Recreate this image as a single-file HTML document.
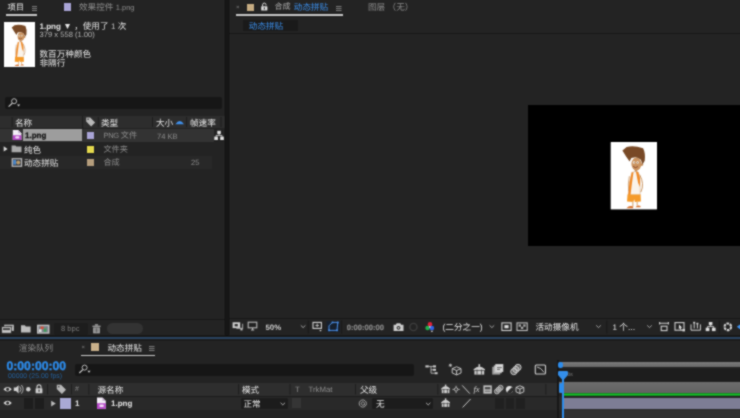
<!DOCTYPE html>
<html lang="zh">
<head>
<meta charset="utf-8">
<title>After Effects</title>
<style>
*{box-sizing:border-box;margin:0;padding:0}
html,body{width:740px;height:418px;overflow:hidden;background:#161616}
body{position:relative;font-family:"Liberation Sans","Noto Sans CJK SC",sans-serif;font-size:8.6px;line-height:1;color:#cfcfcf;-webkit-font-smoothing:antialiased;text-rendering:geometricPrecision}
.a{position:absolute}
.t{position:absolute;white-space:nowrap;line-height:10px;height:10px}
.panel{position:absolute;background:#232323;overflow:hidden}
.g{color:#8c8c8c}
.w{color:#e6e6e6}
.b{color:#3b8eea}
.bold{font-weight:bold}
svg{position:absolute;overflow:visible}
</style>
</head>
<body>
<svg width="0" height="0" style="position:absolute;left:0;top:0" aria-hidden="true"><defs><filter id="soften" x="0" y="0" width="100%" height="100%" color-interpolation-filters="sRGB"><feConvolveMatrix order="3" kernelMatrix="1 2 1 2 8 2 1 2 1" divisor="20" edgeMode="duplicate" preserveAlpha="true"/></filter></defs></svg>
<div id="root" style="position:absolute;left:0;top:0;width:740px;height:418px;overflow:hidden;filter:url(#soften)">

<!-- ================= PROJECT PANEL ================= -->
<div class="panel" id="project" style="left:0;top:0;width:225px;height:335px">
  <!-- tabs -->
  <div class="t w" style="left:7.5px;top:2px;font-size:8.3px">项目</div>
  <svg style="left:32px;top:5.5px" width="5" height="5" viewBox="0 0 5 5"><path d="M0 .5h5M0 2.5h5M0 4.5h5" stroke="#8c8c8c" stroke-width=".85"/></svg>
  <div class="a" style="left:6px;top:14.4px;width:31px;height:1.3px;background:#c8c8c8"></div>
  <div class="a" style="left:64px;top:3px;width:7.2px;height:7.5px;background:#a9a4d6"></div>
  <div class="t g" style="left:79px;top:2px">效果控件 <span style="font-size:7.5px">1.png</span></div>

  <!-- thumbnail -->
  <div class="a" style="left:4px;top:22px;width:30.5px;height:45px;background:#fff"></div>

  <!-- info -->
  <div class="t w" style="left:39.5px;top:21px"><span class="bold" style="font-size:8px">1.png</span> <span style="font-size:8.6px;position:relative;top:.4px">▼</span> ，使用了 <span style="font-size:8px;color:#c4c4c4">1</span> 次</div>
  <div class="t" style="left:39.5px;top:29.5px;font-size:7.6px;color:#b4b4b4">379 x 558 (1.00)</div>
  <div class="t w" style="left:39.5px;top:48.5px">数百万种颜色</div>
  <div class="t w" style="left:39.5px;top:57.5px">非隔行</div>

  <!-- search -->
  <div class="a" style="left:4.5px;top:97px;width:217px;height:12px;background:#161616;border-radius:2px"></div>

  <!-- header row -->
  <div class="a" style="left:0;top:115.6px;width:224.6px;height:12.7px;background:#2d2d2d"></div>
  <div class="t w" style="left:15px;top:118px">名称</div>
  <div class="t w" style="left:101px;top:118px">类型</div>
  <div class="t w" style="left:156px;top:118px">大小</div>
  <div class="t w" style="left:190px;top:118px">帧速率</div>

  <!-- row 1 selected -->
  <div class="a" style="left:0;top:128.7px;width:214px;height:13px;background:#333333"></div>
  <div class="a" style="left:23px;top:128.7px;width:59px;height:12.6px;background:#9d9d9d"></div>
  <div class="t bold" style="left:25px;top:131.3px;font-size:8px;color:#141414;-webkit-text-stroke:.25px #141414">1.png</div>
  <div class="a" style="left:86.8px;top:132px;width:7px;height:7px;background:#a9a4d6"></div>
  <div class="t g" style="left:103.4px;top:131.3px;font-size:8.2px"><span style="font-size:7.5px;letter-spacing:-.25px">PNG</span><span style="display:inline-block;width:1.9px"></span>文件</div>
  <div class="t g" style="left:157px;top:131.9px;font-size:7.6px">74 KB</div>

  <!-- row 2 -->
  <div class="t w" style="left:24px;top:144.8px">纯色</div>
  <div class="a" style="left:86.8px;top:145.5px;width:7px;height:7px;background:#e4d84c"></div>
  <div class="t g" style="left:103.4px;top:144.8px;font-size:8.2px">文件夹</div>

  <!-- row 3 -->
  <div class="a" style="left:0;top:155.6px;width:212px;height:13.4px;background:#282828"></div>
  <div class="t w" style="left:24px;top:158.4px">动态拼贴</div>
  <div class="a" style="left:86.8px;top:159px;width:7px;height:7px;background:#b59d7c"></div>
  <div class="t g" style="left:103.4px;top:158.4px;font-size:8.2px">合成</div>
  <div class="t g" style="left:191px;top:158.4px;font-size:7.6px">25</div>

  <!-- bottom toolbar -->
  <div class="a" style="left:0;top:318.7px;width:225px;height:1.2px;background:#181818"></div>
  <div class="a" style="left:53.8px;top:322.5px;width:34px;height:12px;background:#1d1d1d;border-radius:1.5px"></div>
  <div class="t" style="left:61px;top:323.7px;font-size:7.6px;color:#7d7d7d">8 bpc</div>
  <div class="a" style="left:106.8px;top:323px;width:36px;height:11.4px;background:#333333;border-radius:5.7px"></div>
</div>

<!-- ================= COMP PANEL ================= -->
<div class="panel" id="comp" style="left:228.5px;top:0;width:511.5px;height:335px">
  <!-- tabs (coords relative: subtract 228.5) -->
  <div class="t g" style="left:7.5px;top:2.5px;font-size:6px">×</div>
  <div class="a" style="left:18.5px;top:3.6px;width:7px;height:7px;background:#c6ac82"></div>
  <div class="t g" style="left:46px;top:2px;color:#a8a8a8;font-size:8.1px">合成</div>
  <div class="t b" style="left:65.3px;top:2px">动态拼贴</div>
  <svg style="left:107.5px;top:5.5px" width="5.5" height="5" viewBox="0 0 5.5 5"><path d="M0 .5h5.5M0 2.5h5.5M0 4.5h5.5" stroke="#8c8c8c" stroke-width=".85"/></svg>
  <div class="a" style="left:7.5px;top:14.2px;width:106.5px;height:1.4px;background:#c8c8c8"></div>
  <div class="t g" style="left:139.5px;top:2px">图层 （无）</div>

  <!-- breadcrumb -->
  <div class="a" style="left:14.5px;top:20px;width:55px;height:10.8px;background:#1a1a1a"></div>
  <div class="t b" style="left:20.3px;top:20.5px">动态拼贴</div>
  <div class="a" style="left:0;top:32.6px;width:512px;height:1.2px;background:#171717"></div>

  <!-- viewer -->
  <div class="a" style="left:299px;top:104.6px;width:213px;height:141.8px;background:#000"></div>
  <div class="a" style="left:382.2px;top:142.2px;width:46.2px;height:67.2px;background:#fff"></div>

  <!-- toolbar (x relative: page x - 228.5) -->
  <div class="a" style="left:0;top:318px;width:512px;height:1.2px;background:#181818"></div>
  <div class="t bold" style="left:37px;top:322.7px;font-size:7.8px;color:#cdcdcd">50%</div>
  <div class="t bold" style="left:118.3px;top:322.7px;font-size:7.6px;color:#8a8a8a;-webkit-text-stroke:.2px #8a8a8a">0:00:00:00</div>
  <div class="t w" style="left:214px;top:322px">(二分之一)</div>
  <div class="t w" style="left:307px;top:322px">活动摄像机</div>
  <div class="t w" style="left:384px;top:322px"><span style="font-size:8px">1</span> 个...</div>
</div>

<!-- gutter blue line -->
<div class="a" style="left:0;top:335px;width:740px;height:4px;background:#181818"></div>
<div class="a" style="left:0;top:336.7px;width:740px;height:2.5px;background:#294360"></div>

<!-- ================= TIMELINE PANEL ================= -->
<div class="panel" id="timeline" style="left:0;top:339px;width:740px;height:79px">
  <!-- coords relative: subtract 339 from y -->
  <div class="t g" style="left:18.8px;top:3.5px">渲染队列</div>
  <div class="t g" style="left:81.5px;top:4px;font-size:6px">×</div>
  <div class="a" style="left:91px;top:4.3px;width:8.3px;height:7.6px;background:#c9b08a"></div>
  <div class="t w" style="left:107.5px;top:3.5px">动态拼贴</div>
  <svg style="left:149px;top:7px" width="5.5" height="5" viewBox="0 0 5.5 5"><path d="M0 .5h5.5M0 2.5h5.5M0 4.5h5.5" stroke="#8c8c8c" stroke-width=".85"/></svg>
  <div class="a" style="left:81px;top:16px;width:73.5px;height:1.4px;background:#c8c8c8"></div>

  <div class="t bold" style="left:6.5px;top:20.5px;font-size:12.2px;line-height:12px;height:12px;color:#2d8ceb;-webkit-text-stroke:.35px #2d8ceb">0:00:00:00</div>
  <div class="t" style="left:8px;top:34px;font-size:6.9px;line-height:7px;height:7px;color:#24609c">00000 (25.00 fps)</div>

  <!-- search -->
  <div class="a" style="left:75px;top:24.6px;width:339px;height:12px;background:#161616;border-radius:2px"></div>

  <!-- header row -->
  <div class="a" style="left:0;top:43.5px;width:557px;height:13.5px;background:#2e2e2e"></div>
  <div class="t w" style="left:97.5px;top:45.5px">源名称</div>
  <div class="t w" style="left:242px;top:45.5px">模式</div>
  <div class="t g" style="left:295px;top:45.5px;font-size:7.8px">T&nbsp;&nbsp;&nbsp;&nbsp;TrkMat</div>
  <div class="t w" style="left:360px;top:45.5px">父级</div>
  <div class="t g" style="left:75px;top:45.5px;font-size:7px">#</div>
  <div class="t" style="left:473.4px;top:45px;font-size:8.6px;font-style:italic;color:#cfcfcf;font-family:'Liberation Serif',serif">fx</div>

  <div class="a" style="left:0;top:56.8px;width:557px;height:1.2px;background:#1b1b1b"></div>
  <!-- layer row -->
  <div class="a" style="left:0;top:58px;width:557px;height:13.3px;background:#292929"></div>
  <div class="a" style="left:23.8px;top:59px;width:8.8px;height:10.5px;background:#1d1d1d"></div>
  <div class="a" style="left:34.5px;top:59px;width:9.2px;height:10.5px;background:#1d1d1d"></div>
  <div class="a" style="left:60px;top:58.6px;width:10.8px;height:11.2px;background:#a9a9d4"></div>
  <div class="t w bold" style="left:75px;top:60px;font-size:8px">1</div>
  <div class="t w bold" style="left:111px;top:60px;font-size:8px">1.png</div>
  <div class="a" style="left:240.5px;top:58.5px;width:47.5px;height:11.5px;background:#1c1c1c;border-radius:1.5px"></div>
  <div class="t w" style="left:243.5px;top:59.8px">正常</div>
  <div class="a" style="left:292px;top:59px;width:9px;height:10px;background:#353535"></div>
  <div class="a" style="left:372px;top:58.5px;width:60.5px;height:11.5px;background:#1c1c1c;border-radius:1.5px"></div>
  <div class="t w" style="left:376px;top:59.8px">无</div>
  <div class="a" style="left:494.5px;top:59px;width:9px;height:10.5px;background:#202020"></div>
  <div class="a" style="left:505.5px;top:59px;width:8.5px;height:10.5px;background:#202020"></div>
  <div class="a" style="left:515.5px;top:59px;width:9px;height:10.5px;background:#202020"></div>

  <!-- time area -->
  <div class="a" style="left:557px;top:21px;width:1.6px;height:58px;background:#171717"></div>
  <div class="a" style="left:0;top:0;width:740px;height:2.4px;background:#1c1c1c"></div>
  <div class="a" style="left:563.6px;top:71.3px;width:177px;height:8px;background:#313131"></div>
  <div class="a" style="left:559px;top:22.7px;width:181px;height:5.8px;background:linear-gradient(#7a7a7a,#686868)"></div>
  <div class="a" style="left:558.4px;top:22.5px;width:4.8px;height:6.2px;background:#2d8ceb;border-radius:2px"></div>
  <div class="a" style="left:559px;top:29.7px;width:181px;height:12.8px;background:#1d1d1d"></div>
  <div class="a" style="left:559px;top:43.3px;width:181px;height:10.4px;background:linear-gradient(#6c6c6c,#626262)"></div>
  <div class="a" style="left:559px;top:43.5px;width:4px;height:10px;background:#2d8ceb;border-radius:2px"></div>
  <div class="a" style="left:563px;top:53.9px;width:177px;height:3.6px;background:linear-gradient(#0b5a14,#19c22c 35%,#19c22c 65%,#0b5a14)"></div>
  <div class="a" style="left:559px;top:58px;width:181px;height:13.3px;background:#2a2a2a"></div>
  <div class="a" style="left:563.9px;top:58.7px;width:177px;height:11.6px;background:#7d7d95"></div>
  <div class="a" style="left:562.3px;top:40px;width:1.4px;height:39px;background:#2d8ceb"></div>
  <svg style="left:558.1px;top:31.7px" width="10" height="9.6" viewBox="0 0 10 9.6"><path d="M1.2 0h7.6q1.2 0 1.2 1.2v2.9L5 9.6 0 4.1V1.2Q0 0 1.2 0z" fill="#338eea"/></svg>
  <div class="t" style="left:567.5px;top:30.5px;font-size:5px;color:#8a8a8a">0s</div>
</div>


<!-- ================= ICON OVERLAY (page coordinates) ================= -->
<svg id="icons" style="left:0;top:0;z-index:5" width="740" height="418" viewBox="0 0 740 418">
<defs>
  <g id="boy">
    <rect x="0" y="0" width="46.2" height="67.2" fill="#fff"/>
    <g filter="url(#soft)">
      <ellipse cx="25.7" cy="21.8" rx="5" ry="6.5" fill="#cb9460"/>
      <circle cx="31.1" cy="22.4" r="1.4" fill="#c58c58"/>
      <path d="M11.7 8.2 L16 4.8 Q23 3 32.4 6 Q35 11 34 18.6 L31.8 22.2 L30.2 17.6 Q27.4 15 24.8 15 L20.6 15.8 L18.9 19.4 L15.4 14.2 Z" fill="#784a25"/>
      <ellipse cx="23.3" cy="20.3" rx="1.2" ry="1.3" fill="#f6ece0"/><ellipse cx="26.9" cy="20.3" rx="1.2" ry="1.3" fill="#f6ece0"/>
      <circle cx="23.5" cy="20.5" r=".45" fill="#3a2414"/><circle cx="27" cy="20.5" r=".45" fill="#3a2414"/>
      <path d="M22.4 24.2q2.2 2.4 4.8 .2" stroke="#7a3a22" stroke-width=".8" fill="none"/>
      <rect x="24" y="27.4" width="2.6" height="3.2" fill="#cb9460"/>
      <path d="M21 30.2 L24.2 29.4 L27.6 29.8 L29.3 36 L29.5 52.8 L17.5 52.8 L18.8 40 Z" fill="#faf3ea" stroke="#b98a5c" stroke-width=".35"/>
      <path d="M21 30.2 L22.8 29.9 L21 43 L19.8 52.8 L17.5 52.8 L18.8 40 Z" fill="#f08a28"/>
      <path d="M25.2 29.6 L27.6 29.8 L29.3 36 L29.4 45 L27.4 40.5 Z" fill="#f08a28"/>
      <path d="M28.9 32.4 q5.2 9.4 1.2 17.6" stroke="#c99562" stroke-width="1" fill="none"/>
      <path d="M18.6 34 q-1.6 8 -.6 15" stroke="#c99562" stroke-width=".8" fill="none"/>
      <path d="M16.8 52.4 L29.9 52.4 L30.2 59.4 L24.2 59.7 L23.5 57 L22.7 59.7 L16.3 59.4 Z" fill="#f59b2a"/>
      <rect x="21.3" y="59.5" width="1.6" height="4.8" fill="#e3c29a"/>
      <rect x="25.8" y="59.5" width="1.5" height="4" fill="#e3c29a"/>
      <path d="M15.7 66 q3 -3.4 6.8 -1.8 v1.8z" fill="#d8702a"/>
      <path d="M24.6 65 q2.4 -2.7 5.2 -1.1 v1.1z" fill="#d8702a"/>
    </g>
  </g>
  <filter id="soft" x="-10%" y="-10%" width="120%" height="120%"><feGaussianBlur stdDeviation="0.45"/></filter>
</defs>

<!-- artwork -->
<use href="#boy" x="610.7" y="142.2"/>
<use href="#boy" transform="translate(4 22) scale(0.66 0.668)"/>

<!-- project: search icon -->
<g fill="none" stroke="#c4c4c4" stroke-width=".95"><circle cx="14.1" cy="101.2" r="2.5"/><path d="M12.3 103.2 L8.6 106.6" stroke-width="1.25"/></g>
<path d="M17 104.4h3.2l-1.6 2z" fill="#cfcfcf"/>

<!-- project: header dividers + tag + sort arrow -->
<g stroke="#1c1c1c" stroke-width=".9"><path d="M12.2 117v10M82.6 116v12.5M98.4 117v10M152.5 117v10M186.6 117v10M221 117v10"/></g>
<path d="M86.2 117.4h4l4.9 5-4 4-4.9-5z" fill="#b8b8b8"/><circle cx="88.1" cy="119.3" r=".8" fill="#2e2e2e"/>
<path d="M175.4 124.3 Q179.7 117.6 184 124.3z" fill="#3f8fea"/>

<!-- project: png file icon -->
<path d="M12.8 130.1h5.4l3.2 3.2v6.8h-8.6z" fill="#f3eef6"/>
<path d="M18.2 130.1v3.2h3.2z" fill="#c9b6d4"/>
<path d="M12.8 135.2h8.6v4.9h-8.6z" fill="#b648c8"/>
<rect x="15.2" y="136.3" width="4.2" height="2.3" rx="1" fill="#f3def6"/>

<!-- project: folder row -->
<path d="M3.7 146.3l3.9 2.6-3.9 2.6z" fill="#d6d6d6"/>
<path d="M11.6 145.5h3.8l.9 1.1h5.2v5.7h-9.9z" fill="#a9a9a9"/>

<!-- project: comp icon -->
<rect x="11.6" y="158.1" width="10.6" height="8.8" fill="#b9b9b9"/>
<rect x="12.9" y="159.3" width="8" height="6.4" fill="#3a3f48"/>
<rect x="13.2" y="160" width="2.8" height="4.6" fill="#4a86c8"/>
<circle cx="18.2" cy="162.6" r="2" fill="#b89a6a"/>

<!-- project: flowchart icon -->
<g fill="#e2e2e2"><rect x="217.3" y="130.8" width="3.5" height="3.2"/><rect x="214.3" y="136.6" width="3.6" height="3.4"/><rect x="220.2" y="136.6" width="3.6" height="3.4"/></g>
<path d="M219.05 134v1.4M216.1 136.8v-1.4h5.9v1.4" stroke="#e2e2e2" stroke-width=".8" fill="none"/>

<!-- project: bottom toolbar icons -->
<g transform="translate(0 .7)">
<g fill="#c6c6c6"><rect x="4.2" y="324" width="9.6" height="6.2"/><rect x="1.7" y="326" width="9.6" height="6.5" stroke="#232323" stroke-width=".7"/></g>
<rect x="5.6" y="325.2" width="6.8" height="1" fill="#3a3a3a"/><rect x="3" y="327.4" width="7" height="2" fill="#444"/>
<path d="M21 324.5h3.9l.9 1.2h4.8v6.1h-9.6z" fill="#bcbcbc"/>
<rect x="37" y="324" width="12.5" height="9" fill="#c4c4c4"/>
<rect x="38.4" y="325.3" width="9.7" height="6.4" fill="#7c828a"/>
<rect x="40.6" y="325.8" width="3" height="2.6" fill="#d2503c"/><rect x="43.8" y="327.8" width="2.6" height="3.4" fill="#3f9a5a"/><rect x="39" y="328.6" width="2.6" height="2.6" fill="#e8e8e8"/>
<g fill="#b4b4b4"><rect x="92.4" y="325" width="8.2" height="1.1"/><rect x="94.9" y="323.6" width="3.2" height="1.2"/><path d="M93.2 326.8h6.6v5.8h-6.6z"/></g>
<path d="M95 327.6v4.2M96.5 327.6v4.2M98 327.6v4.2" stroke="#2a2a2a" stroke-width=".6"/>
</g>

<!-- comp: tab lock -->
<path d="M262.6 6.4v-1.6a1.7 1.7 0 0 1 3.4 0v.6" stroke="#dcdcdc" stroke-width="1" fill="none"/>
<rect x="261.2" y="6.2" width="6.2" height="4.3" rx=".5" fill="#dcdcdc"/><rect x="263.8" y="7.4" width="1.1" height="2" fill="#2a2a2a"/>

<!-- comp: toolbar icons -->
<g>
  <rect x="232.6" y="322.3" width="7.6" height="5.8" fill="#cfcfcf"/><rect x="234.6" y="324" width="3.2" height="2.4" fill="#303030"/>
  <path d="M236.4 328.4h6.2v-4.6" stroke="#9a9a9a" stroke-width="1.1" fill="none"/><rect x="240.4" y="328.6" width="2.2" height="1.8" fill="#bdbdbd"/>
  <rect x="248.2" y="322.2" width="8.6" height="5.6" fill="none" stroke="#b8b8b8" stroke-width="1.1"/><path d="M251 330h3.2M252.6 328v2" stroke="#b8b8b8" stroke-width="1.1"/>
  <path d="M300.8 325.4l2.3 2.2 2.3-2.2" stroke="#b0b0b0" stroke-width=".9" fill="none"/>
  <path d="M308.3 320.5v13M341.6 320.5v13" stroke="#191919" stroke-width=".9"/>
  <rect x="313" y="322.4" width="8.4" height="6" fill="none" stroke="#d4d4d4" stroke-width="1.1"/><path d="M317.2 323.6v3.6M315.4 325.4h3.6" stroke="#d4d4d4" stroke-width=".8"/><path d="M319.2 330h2.6l-1.3 1.5z" fill="#d4d4d4"/>
  <rect x="326.6" y="321" width="13.2" height="11" fill="#16202e"/>
  <path d="M329 330.4v-4.6l3.4-3.4h5.4l-.8 8z" fill="none" stroke="#4b8fe6" stroke-width="1"/>
  <g fill="#4b8fe6"><rect x="328.2" y="329.5" width="1.7" height="1.7"/><rect x="336.2" y="329.5" width="1.7" height="1.7"/><rect x="337" y="321.6" width="1.7" height="1.7"/><rect x="331.6" y="321.6" width="1.7" height="1.7"/></g>
  <!-- camera -->
  <path d="M393.6 324.8h2.2l.9-1.6h3.6l.9 1.6h2.3v6.2h-9.9z" fill="#cdcdcd"/><circle cx="398.5" cy="327.8" r="1.9" fill="#2a2a2a"/><circle cx="398.5" cy="327.8" r=".9" fill="#cdcdcd"/>
  <!-- dim -->
  <circle cx="413.4" cy="327" r="3.6" fill="none" stroke="#3d3d3d" stroke-width="1.4"/>
  <!-- rgb -->
  <circle cx="430" cy="324.4" r="2.3" fill="#e0223a"/><circle cx="427.6" cy="328" r="2.3" fill="#1fb24a"/><circle cx="431.9" cy="328" r="2.3" fill="#2f62e4"/><circle cx="429.8" cy="326.9" r=".9" fill="#d8c8e8"/>
  <path d="M430.6 330.8h2.6l-1.3 1.4z" fill="#e4e4e4"/>
  <path d="M489.6 325.4l2.3 2.2 2.3-2.2M596.2 325.4l2.3 2.2 2.3-2.2M647.2 325.4l2.3 2.2 2.3-2.2" stroke="#b0b0b0" stroke-width=".9" fill="none"/>
  <rect x="501.9" y="322.9" width="9.2" height="7.6" fill="none" stroke="#cfcfcf" stroke-width="1.1"/><rect x="504.4" y="325.1" width="4.2" height="3.2" fill="#dcdcdc"/>
  <rect x="517" y="322.9" width="10.2" height="7.6" fill="none" stroke="#bdbdbd" stroke-width="1.1"/>
  <g fill="#a8a8a8"><rect x="518.6" y="324.4" width="2.4" height="2.3"/><rect x="523.2" y="324.4" width="2.4" height="2.3"/><rect x="520.9" y="326.7" width="2.4" height="2.3"/></g>
  <path d="M606.8 320.5v13M719.4 320.5v13" stroke="#191919" stroke-width=".9"/>
  <!-- right icons -->
  <path d="M659.2 323.3h9.6M659.6 322v2.6M668.4 322v2.6" stroke="#d0d0d0" stroke-width="1.1"/><rect x="661.2" y="326.2" width="5.8" height="4.4" fill="none" stroke="#d0d0d0" stroke-width="1.1"/>
  <rect x="675" y="322.6" width="9" height="7.6" fill="none" stroke="#d0d0d0" stroke-width="1.1"/><path d="M679 324.6l3.2 3-1.5.2.8 1.8-.9.4-.8-1.8-1 .9z" fill="#e0e0e0"/><rect x="682.4" y="329" width="2.6" height="2.4" fill="#cfcfcf"/>
  <path d="M691 324.4v5.8h9.4v-5.8" fill="none" stroke="#d0d0d0" stroke-width="1"/><path d="M694.2 322.4v6M697.4 323.4v5" stroke="#d0d0d0" stroke-width="1"/><rect x="693.2" y="321.8" width="2" height="1.6" fill="#d0d0d0"/><rect x="696.4" y="322.8" width="2" height="1.6" fill="#d0d0d0"/>
  <g fill="#dcdcdc"><rect x="708.8" y="322" width="3.6" height="3.2"/><rect x="705.7" y="327.7" width="3.7" height="3.4"/><rect x="711.9" y="327.7" width="3.7" height="3.4"/></g>
  <path d="M710.6 325.2v1.4M707.5 327.9v-1.4h6.2v1.4" stroke="#dcdcdc" stroke-width=".8" fill="none"/>
  <circle cx="727.8" cy="326.8" r="3.3" fill="none" stroke="#d6d6d6" stroke-width="2.1" stroke-dasharray="2.6 .85"/>
  <path d="M736.8 326.8l3.2-2.4v4.8z" fill="#3f8fea"/>
</g>

<!-- timeline: search icon -->
<g fill="none" stroke="#c4c4c4" stroke-width=".95"><circle cx="84.6" cy="367.6" r="2.5"/><path d="M82.8 369.6 L79.3 373" stroke-width="1.25"/></g>
<path d="M87.4 370.8h3.2l-1.6 2z" fill="#cfcfcf"/>

<!-- timeline: top-row icons -->
<g fill="#cdcdcd" stroke="none">
  <rect x="425.4" y="365.4" width="3.4" height="2"/><rect x="433" y="365.4" width="3" height="2"/><rect x="433" y="368.8" width="3" height="2"/><rect x="434.6" y="372.2" width="3" height="2"/>
</g>
<path d="M428.8 366.4h4.2M431 366.4v3.4h2M431 369.8v3.4h3.6" stroke="#cdcdcd" stroke-width=".8" fill="none"/>
<g fill="none" stroke="#cdcdcd" stroke-width=".95">
  <path d="M452.2 368.6l4.4-1.8 4.4 1.8v4.4l-4.4 1.9-4.4-1.9zM452.2 368.6l4.4 1.9 4.4-1.9M456.6 370.5v4.4"/>
  <path d="M450.4 363.6v3.4M448.7 365.3h3.4M449.2 364.1l2.4 2.4M451.6 364.1l-2.4 2.4" stroke-width=".7"/>
</g>
<g fill="#cdcdcd">
  <path d="M473.6 369.2q5.6-5.4 11.4 0v1h-11.4z"/><rect x="474.4" y="370.8" width="9.8" height="3.8"/><rect x="478.5" y="364.2" width="1.6" height="2.6"/>
</g>
<path d="M477 369.6v5M481.6 369.6v5" stroke="#232323" stroke-width=".7"/>
<g><rect x="492.2" y="366.8" width="8" height="7.8" fill="#9a9a9a"/><rect x="493.8" y="365.4" width="8" height="7.8" fill="#b6b6b6"/><rect x="495.3" y="364.1" width="8" height="7.8" fill="#d6d6d6"/><path d="M497 367.6h4.8M497 369.4h3" stroke="#4a4a4a" stroke-width=".8"/></g>
<g fill="rgba(190,190,190,.4)" stroke="#cdcdcd" stroke-width="1"><circle cx="518" cy="367.4" r="3.1"/><circle cx="515.9" cy="369.5" r="3.1"/><circle cx="513.8" cy="371.6" r="3.1"/></g>
<rect x="535.3" y="365" width="10.2" height="9" rx="1" fill="none" stroke="#d0d0d0" stroke-width="1.1"/><path d="M537 367q4 .4 7 5.4" stroke="#d0d0d0" stroke-width=".9" fill="none"/>

<!-- timeline: header icons -->
<g stroke="#1c1c1c" stroke-width=".9"><path d="M47.6 384v10.5M71.5 384v10.5M88.8 384v10.5M238.6 384v10.5M290 384v10.5M355.5 384v10.5M437.8 384v10.5M545.8 384v10.5"/></g>
<g id="eye"><path d="M3.4 389.2q4.2-4.6 8.4 0q-4.2 4.6-8.4 0z" fill="#d4d4d4"/><circle cx="7.6" cy="389.2" r="1.5" fill="#2a2a2a"/></g>
<use href="#eye" y="13.8"/>
<path d="M13.8 387.6h2.2l2.6-2.4v8.2l-2.6-2.4h-2.2z" fill="#d0d0d0"/><path d="M19.8 386.4q2.2 2.9 0 5.8M21.4 385q3.4 4.2 0 8.6" stroke="#d0d0d0" stroke-width=".8" fill="none"/>
<circle cx="28.3" cy="389.3" r="2.2" fill="#d0d0d0"/>
<path d="M37 388.4v-1.5a2 2 0 0 1 4 0v1.5" stroke="#d0d0d0" stroke-width="1.1" fill="none"/><rect x="35.6" y="388.2" width="6.8" height="5" rx=".5" fill="#d0d0d0"/><rect x="38.5" y="389.6" width="1.1" height="2.2" fill="#2a2a2a"/>
<path d="M56.8 384.8h4.2l5 5-4.1 4.1-5.1-5z" fill="#b8b8b8"/><circle cx="58.8" cy="386.8" r=".8" fill="#2e2e2e"/>

<!-- timeline: switches header -->
<g id="shy" fill="#cfcfcf"><path d="M441.2 388.6q4.4-5 8.8 0v.9h-8.8z"/><rect x="441.8" y="390" width="7.6" height="3.2"/><rect x="444.9" y="384.6" width="1.4" height="2"/><path d="M443.8 389v4.6M447.4 389v4.6" stroke="#2b2b2b" stroke-width=".7"/></g>
<use href="#shy" y="13.7"/>
<g stroke="#cfcfcf" stroke-width=".85" fill="none"><circle cx="456.1" cy="389.4" r="1.7"/><path d="M456.1 385.8v1.4M456.1 391.6v1.4M452.5 389.4h1.4M458.3 389.4h1.4"/></g>
<path d="M462.2 385.4l7.6 8.2" stroke="#cfcfcf" stroke-width=".95"/>
<path d="M462.6 407.4l8-8.4" stroke="#cfcfcf" stroke-width=".95"/>
<rect x="483.4" y="385.4" width="8.4" height="8.2" fill="#c4c4c4"/><rect x="484.8" y="387" width="5.6" height="2.4" fill="#4a4a4a"/><rect x="484.8" y="390.6" width="5.6" height="1.4" fill="#7a7a7a"/>
<g fill="rgba(190,190,190,.4)" stroke="#bdbdbd" stroke-width=".9"><circle cx="500.6" cy="387.8" r="2.5"/><circle cx="498.7" cy="389.6" r="2.5"/><circle cx="496.9" cy="391.4" r="2.5"/></g>
<circle cx="509.5" cy="389.6" r="3.6" fill="#e0e0e0"/><path d="M506.95 392.15a3.6 3.6 0 0 0 5.1-5.1z" fill="#2b2b2b"/>
<g fill="none" stroke="#d4d4d4" stroke-width=".9"><path d="M516 387.4l3.9-1.6 3.9 1.6v4.4l-3.9 1.7-3.9-1.7zM516 387.4l3.9 1.7 3.9-1.7M519.9 389.1v4.4"/></g>

<!-- timeline: layer row icons -->
<path d="M51.2 400.8l4.6 2.8-4.6 2.8z" fill="#bcbcbc"/>
<path d="M97 397.6h5.4l3.4 3.3v8h-8.8z" fill="#f3eef6"/><path d="M102.4 397.6v3.3h3.4z" fill="#c9b6d4"/><path d="M97 403.2h8.8v5.7h-8.8z" fill="#b648c8"/><rect x="99.4" y="404.6" width="4.4" height="2.4" rx="1" fill="#f3def6"/>
<path d="M280.6 402.8l2.2 2.1 2.2-2.1M426 402.8l2.2 2.1 2.2-2.1" stroke="#b8b8b8" stroke-width=".9" fill="none"/>
<path d="M365.5 405.9a3.6 3.6 0 1 1 .9-2.4v.9a.95.95 0 0 1-1.9 0v-.9a1.6 1.6 0 1 0-.1.6" stroke="#b2b2b2" stroke-width=".85" fill="none"/>
</svg>

</div>
</body>
</html>
